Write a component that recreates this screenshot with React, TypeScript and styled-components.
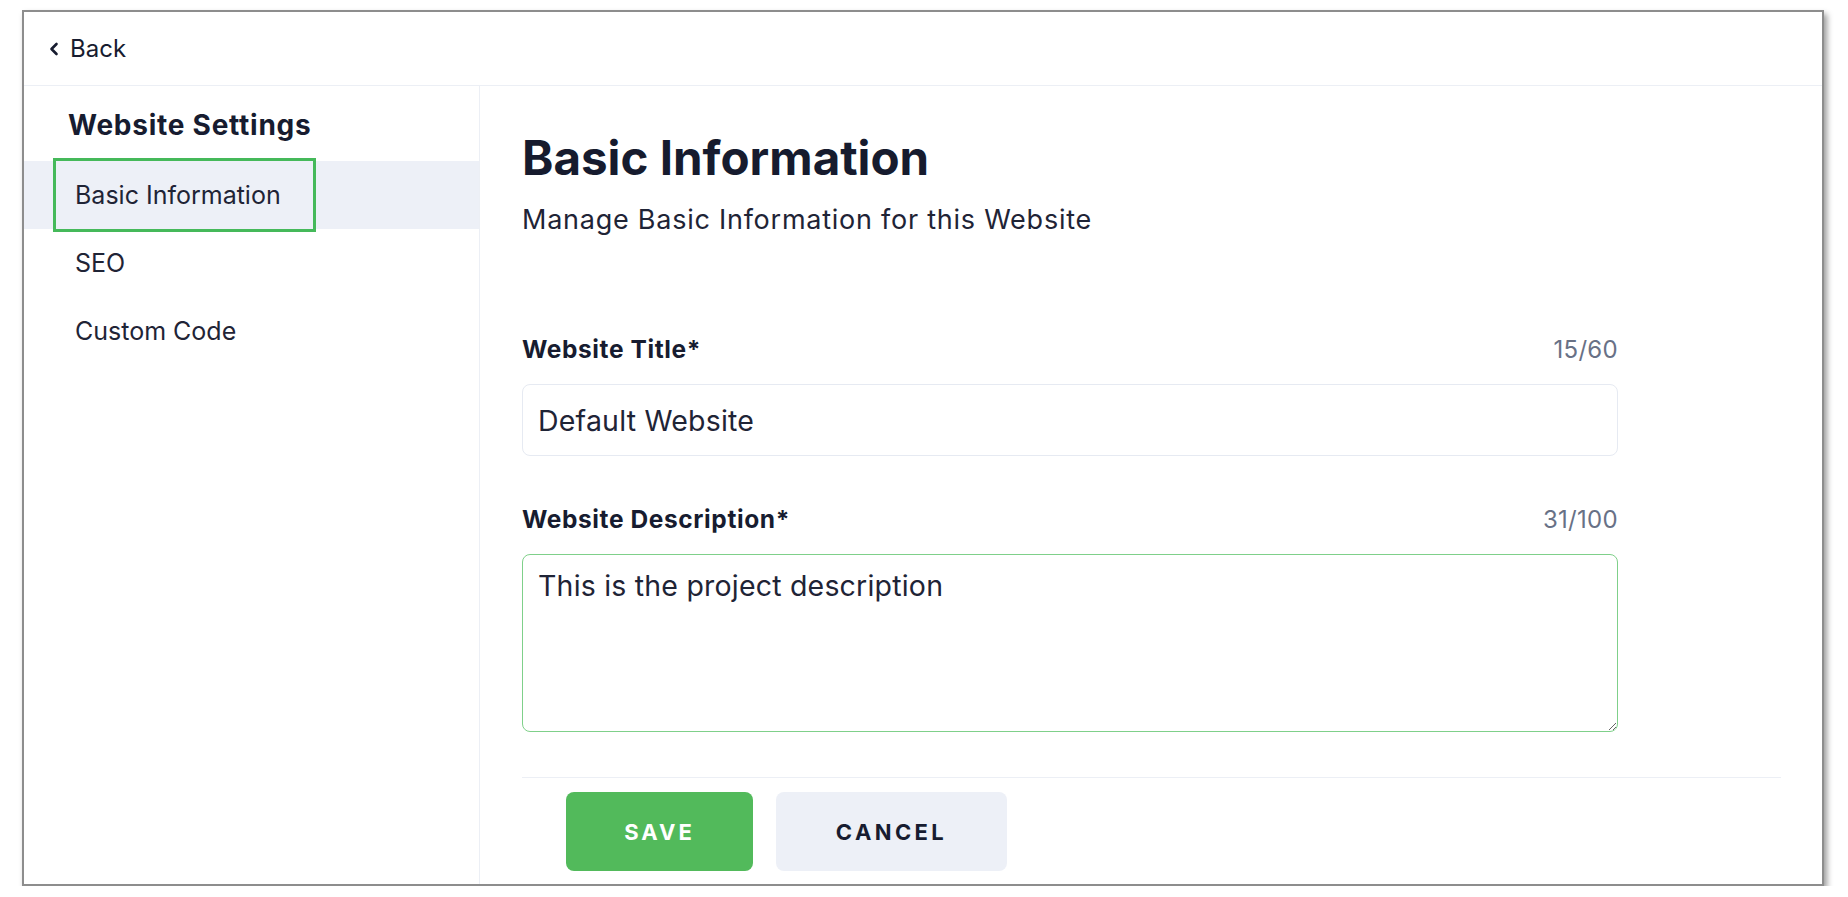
import React from "react";
import styled, { createGlobalStyle } from "styled-components";

const GlobalStyle = createGlobalStyle`
  body {
    margin: 0;
    background: #ffffff;
    font-family: Inter, "Noto Sans", sans-serif;
    color: #171c30;
  }
  * {
    box-sizing: border-box;
  }
`;

const Frame = styled.div`
  margin: 10px 0 0 22px;
  width: 1802px;
  height: 876px;
  border: 2px solid #8d8d8d;
  box-shadow: 3px 4px 6px rgba(0, 0, 0, 0.4);
  background: #ffffff;
  overflow: hidden;
  display: flex;
  flex-direction: column;
`;

const TopBar = styled.div`
  height: 74px;
  flex-shrink: 0;
  display: flex;
  align-items: center;
  padding-left: 24px;
  border-bottom: 1px solid #eceff5;
`;

const BackLink = styled.a`
  display: flex;
  align-items: center;
  gap: 10px;
  font-size: 24px;
  color: #171c30;
  text-decoration: none;
  cursor: pointer;
`;

const Body = styled.div`
  flex: 1;
  display: flex;
  min-height: 0;
`;

const Sidebar = styled.nav`
  width: 456px;
  flex-shrink: 0;
  border-right: 1px solid #eceff5;
  padding-top: 22px;
`;

const SidebarTitle = styled.h2`
  margin: 0 0 19px 44px;
  font-size: 28px;
  line-height: 34px;
  font-weight: 700;
  letter-spacing: 0.75px;
  color: #171c30;
`;

const NavRow = styled.div<{ $active?: boolean }>`
  height: 68px;
  display: flex;
  align-items: stretch;
  padding-left: 32px;
  background: ${(p) => (p.$active ? "#edf0f7" : "transparent")};
`;

const NavLink = styled.a<{ $active?: boolean }>`
  width: 257px;
  display: flex;
  align-items: center;
  padding-left: 19px;
  font-size: 25px;
  color: #1f2436;
  text-decoration: none;
  cursor: pointer;
  outline: ${(p) => (p.$active ? "3px solid #45b95a" : "none")};
`;

const Main = styled.main`
  flex: 1;
  padding: 44px 41px 0 42px;
  display: flex;
  flex-direction: column;
`;

const Heading = styled.h1`
  margin: 0;
  font-size: 47.5px;
  line-height: 56px;
  font-weight: 700;
  color: #161b2e;
`;

const Subtitle = styled.p`
  margin: 17px 0 0;
  font-size: 27px;
  line-height: 34px;
  letter-spacing: 0.75px;
  color: #1f2436;
`;

const Fields = styled.div`
  width: 1096px;
  margin-top: 97px;
  display: flex;
  flex-direction: column;
  gap: 48px;
`;

const Field = styled.div`
  display: flex;
  flex-direction: column;
  gap: 20px;
`;

const LabelRow = styled.div`
  height: 30px;
  display: flex;
  align-items: center;
  justify-content: space-between;
`;

const Label = styled.label`
  font-size: 24.5px;
  font-weight: 700;
  letter-spacing: 0.6px;
  color: #171c30;
`;

const Counter = styled.span`
  font-size: 24px;
  letter-spacing: 0.3px;
  color: #687186;
`;

const TextInput = styled.input`
  height: 72px;
  width: 100%;
  border: 1px solid #e6eaf2;
  border-radius: 8px;
  padding: 0 15px;
  font-family: inherit;
  font-size: 28.5px;
  letter-spacing: 0.2px;
  color: #1f2436;
  background: #ffffff;
  outline: none;
`;

const TextArea = styled.textarea`
  height: 178px;
  width: 100%;
  border: 1px solid #7fd08a;
  border-radius: 8px;
  padding: 12px 15px;
  font-family: inherit;
  font-size: 28.5px;
  line-height: 38px;
  letter-spacing: 0.2px;
  color: #1f2436;
  background: #ffffff;
  outline: none;
  resize: vertical;
`;

const Footer = styled.div`
  margin-top: 45px;
  border-top: 1px solid #eceff5;
  padding: 14px 0 0 44px;
  display: flex;
  gap: 23px;
`;

const Button = styled.button<{ $primary?: boolean }>`
  height: 79px;
  width: ${(p) => (p.$primary ? "187px" : "231px")};
  border: none;
  border-radius: 8px;
  background: ${(p) => (p.$primary ? "#52ba5b" : "#edf0f7")};
  color: ${(p) => (p.$primary ? "#ffffff" : "#171c30")};
  font-family: inherit;
  font-size: 22px;
  font-weight: 700;
  letter-spacing: ${(p) => (p.$primary ? "3px" : "3.4px")};
  cursor: pointer;
`;

const ChevronLeft = () => (
  <svg width="12" height="16" viewBox="0 0 12 16" fill="none">
    <path
      d="M8.5 3L3.5 8L8.5 13"
      stroke="#171c30"
      strokeWidth="2.6"
      strokeLinecap="round"
      strokeLinejoin="round"
    />
  </svg>
);

const navItems = ["Basic Information", "SEO", "Custom Code"];

export default function App() {
  const [title, setTitle] = React.useState("Default Website");
  const [description, setDescription] = React.useState(
    "This is the project description"
  );

  return (
    <>
      <GlobalStyle />
      <Frame>
        <TopBar>
          <BackLink>
            <ChevronLeft />
            Back
          </BackLink>
        </TopBar>
        <Body>
          <Sidebar>
            <SidebarTitle>Website Settings</SidebarTitle>
            {navItems.map((item, i) => (
              <NavRow key={item} $active={i === 0}>
                <NavLink $active={i === 0}>{item}</NavLink>
              </NavRow>
            ))}
          </Sidebar>
          <Main>
            <Heading>Basic Information</Heading>
            <Subtitle>Manage Basic Information for this Website</Subtitle>
            <Fields>
              <Field>
                <LabelRow>
                  <Label>Website Title*</Label>
                  <Counter>{title.length}/60</Counter>
                </LabelRow>
                <TextInput
                  value={title}
                  maxLength={60}
                  onChange={(e) => setTitle(e.target.value)}
                />
              </Field>
              <Field>
                <LabelRow>
                  <Label>Website Description*</Label>
                  <Counter>{description.length}/100</Counter>
                </LabelRow>
                <TextArea
                  value={description}
                  maxLength={100}
                  onChange={(e) => setDescription(e.target.value)}
                />
              </Field>
            </Fields>
            <Footer>
              <Button $primary>SAVE</Button>
              <Button>CANCEL</Button>
            </Footer>
          </Main>
        </Body>
      </Frame>
    </>
  );
}
